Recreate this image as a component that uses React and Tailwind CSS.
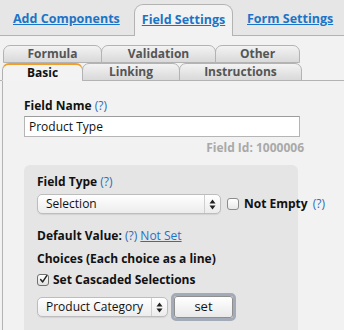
import React from "react";

const font = { fontFamily: '"Open Sans", "DejaVu Sans", sans-serif' };

function Arrows() {
  return (
    <svg width="7" height="11" viewBox="0 0 7 11">
      <path d="M3.5 0.5 L6.5 4.5 L0.5 4.5 Z" fill="#222" />
      <path d="M3.5 10.5 L6.5 6.5 L0.5 6.5 Z" fill="#222" />
    </svg>
  );
}

function Select({ label, width }) {
  return (
    <div
      className={`flex h-[20px] shrink-0 items-stretch rounded-[5px] border border-[#bdbdbd] bg-linear-to-b from-white to-[#ececec] shadow-[0_1px_1px_rgba(0,0,0,0.08)] ${width}`}
    >
      <div className="flex flex-1 items-center pl-[8px] text-[12px] text-[#111]">{label}</div>
      <div className="flex w-[16px] items-center justify-center border-l border-[#cfcfcf]">
        <Arrows />
      </div>
    </div>
  );
}

function Q() {
  return <span className="font-normal text-[#2d6db5]">(?)</span>;
}

function SubTab({ children, w, active, last }) {
  return (
    <div
      className={`flex h-[18px] items-center justify-center rounded-t-[7px] border text-[12px] font-bold ${w} ${
        active
          ? "border-[#b0b0b0] border-t-2 border-t-[#f0a02a] border-b-transparent bg-[#f3f3f3] text-[#111]"
          : "border-[#b3b3b3] bg-linear-to-b from-[#f3f3f3] to-[#d9d9d9] text-[#555]"
      } ${last ? "" : "-mr-px"}`}
    >
      {children}
    </div>
  );
}

export default function App() {
  return (
    <div className="h-[330px] w-[344px] overflow-hidden bg-[#f2f2f2]" style={font}>
      {/* top tabs */}
      <div className="flex h-[36px] items-end border-b border-[#b3b3b3] bg-[#e6e6e6]">
        <div className="flex h-[31px] w-[134px] items-center pl-[13px]">
          <a className="text-[12.5px] font-bold text-[#1b74c7] underline">Add Components</a>
        </div>
        <div className="-mb-px flex h-[32px] w-[99px] items-center justify-center rounded-t-[9px] border border-b-0 border-[#b3b3b3] bg-[#f2f2f2]">
          <a className="text-[12.5px] font-bold text-[#1b74c7] underline">Field Settings</a>
        </div>
        <div className="flex h-[31px] items-center pl-[14px]">
          <a className="text-[12.5px] font-bold text-[#1b74c7] underline">Form Settings</a>
        </div>
      </div>

      {/* sub tabs */}
      <div className="pt-[9px]">
        <div className="flex pl-[3px]">
          <SubTab w="w-[99px]">Formula</SubTab>
          <SubTab w="w-[115px]">Validation</SubTab>
          <SubTab w="w-[85px]" last>Other</SubTab>
        </div>
        <div className="flex items-end border-b border-[#b3b3b3] pl-[2px]">
          <div className="-mb-px flex">
            <SubTab w="w-[81px]" active>Basic</SubTab>
            <SubTab w="w-[98px]">Linking</SubTab>
            <SubTab w="w-[123px]" last>Instructions</SubTab>
          </div>
        </div>

        {/* panel */}
        <div className="ml-[2px] border-l border-[#b3b3b3] pl-[21px] pt-[17px]">
          <div className="text-[12px] font-bold leading-[16px] text-[#111]">
            Field Name <Q />
          </div>
          <div className="mt-[2px] flex h-[21px] w-[276px] items-center border border-[#b5b5b5] border-t-[#9c9c9c] bg-white pl-[4px] text-[12px] text-[#111]">
            Product Type
          </div>
          <div className="mt-[3px] w-[280px] text-right text-[12px] font-bold leading-[16px] text-[#a9a9a9]">
            Field Id: 1000006
          </div>

          {/* gray box */}
          <div className="mt-[9px] h-[200px] w-[274px] rounded-t-[6px] bg-[#e5e5e5] pl-[13px] pt-[9px]">
            <div className="text-[12px] font-bold leading-[16px] text-[#111]">
              Field Type <Q />
            </div>
            <div className="mt-[4px] flex items-center whitespace-nowrap">
              <Select label="Selection" width="w-[184px]" />
              <div className="ml-[6px] h-[12px] w-[12px] shrink-0 rounded-[3px] border border-[#8c8c8c] bg-linear-to-b from-white to-[#e8e8e8]" />
              <span className="ml-[5px] shrink-0 text-[12px] font-bold text-[#111]">Not Empty</span>
              <span className="ml-[5px] shrink-0 text-[12px]"><Q /></span>
            </div>
            <div className="mt-[14px] text-[12px] font-bold leading-[16px] text-[#111]">
              Default Value: <Q />{" "}
              <a className="font-normal text-[#1b74c7] underline">Not Set</a>
            </div>
            <div className="mt-[7px] text-[12px] font-bold leading-[16px] text-[#111]">
              Choices (Each choice as a line)
            </div>
            <div className="mt-[5px] flex items-center">
              <div className="flex h-[12px] w-[12px] items-center justify-center rounded-[3px] border border-[#6f6f6f] bg-linear-to-b from-white to-[#e0e0e0]">
                <svg width="11" height="11" viewBox="0 0 11 11" className="-mt-[2px] ml-[1px]">
                  <path d="M2 5.5 L4.5 8.5 L9.5 0.8" fill="none" stroke="#222" strokeWidth="1.8" strokeLinecap="round" strokeLinejoin="round" />
                </svg>
              </div>
              <span className="ml-[4px] text-[12px] font-bold leading-[16px] text-[#111]">Set Cascaded Selections</span>
            </div>
            <div className="mt-[5px] flex items-center">
              <Select label="Product Category" width="w-[131px]" />
              <div className="ml-[3px] rounded-[5px] border-[3px] border-[#a3abb8] p-0">
                <button className="flex h-[22px] w-[59px] items-center justify-center rounded-[3px] border border-[#8f8f8f] bg-linear-to-b from-white to-[#e9e9e9] text-[13px] text-[#111]">
                  set
                </button>
              </div>
            </div>
          </div>
        </div>
      </div>
    </div>
  );
}
